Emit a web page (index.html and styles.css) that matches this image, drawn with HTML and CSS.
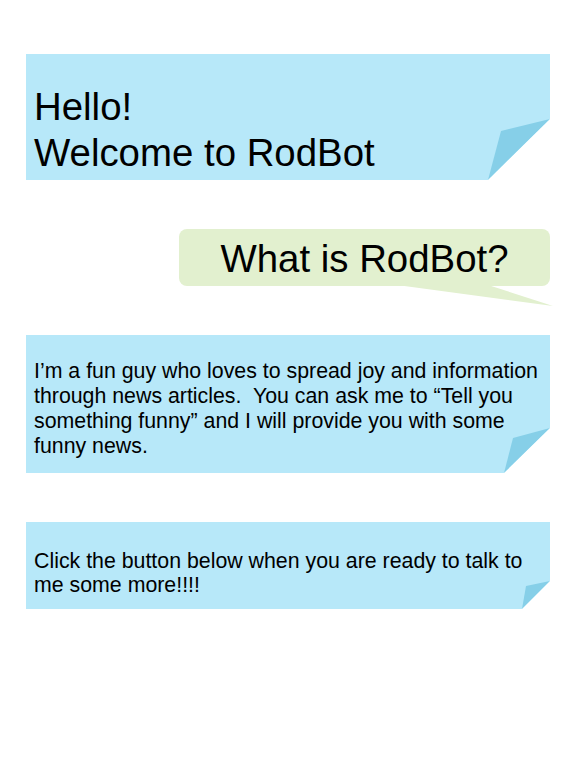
FILE: index.html
```html
<!DOCTYPE html>
<html lang="en">
<head>
<meta charset="utf-8">
<title>RodBot</title>
<link rel="stylesheet" href="styles.css">
</head>
<body>
<main class="chat">
  <section class="note note--lg note--title">
    <p>Hello!<br>Welcome to RodBot</p>
  </section>
  <div class="bubble">What is RodBot?</div>
  <section class="note note--md note--about">
    <p>I’m a fun guy who loves to spread joy and information through news articles.  You can ask me to “Tell you something funny” and I will provide you with some funny news.</p>
  </section>
  <section class="note note--sm note--cta">
    <p>Click the button below when you are ready to talk to me some more!!!!</p>
  </section>
</main>
</body>
</html>
```
FILE: styles.css
```css
* { box-sizing: border-box; }
html, body { margin: 0; padding: 0; background: #ffffff; }
body {
  font-family: "Liberation Sans", Arial, sans-serif;
  color: #000;
  width: 576px;
}
.chat {
  display: flex;
  flex-direction: column;
  gap: 49px;
  padding: 54px 26px 0 26px;
}
.note {
  position: relative;
  background: #b7e8f9;
  width: 524px;
}
.note p { margin: 0; white-space: pre-wrap; }
.note::after {
  content: "";
  position: absolute;
  right: 0;
  bottom: 0;
  background: #86cfe8;
}
.note--lg { clip-path: polygon(0 0, 100% 0, 100% calc(100% - 61px), calc(100% - 62px) 100%, 0 100%); }
.note--lg::after { width: 62px; height: 61px; clip-path: polygon(100% 0, 13px 12px, 0 100%); }
.note--md { clip-path: polygon(0 0, 100% 0, 100% calc(100% - 45px), calc(100% - 46px) 100%, 0 100%); }
.note--md::after { width: 46px; height: 45px; clip-path: polygon(100% 0, 9px 10px, 0 100%); }
.note--sm { clip-path: polygon(0 0, 100% 0, 100% calc(100% - 28px), calc(100% - 28px) 100%, 0 100%); }
.note--sm::after { width: 28px; height: 28px; clip-path: polygon(100% 0, 4px 5px, 0 100%); }

.note--title {
  height: 126px;
  padding: 30px 8px 0 8px;
  font-size: 38.4px;
  line-height: 46px;
}
.note--about {
  height: 138px;
  padding: 24px 10px 0 8px;
  font-size: 21.33px;
  line-height: 25px;
}
.note--cta {
  height: 87px;
  padding: 27px 10px 0 8px;
  font-size: 21.33px;
  line-height: 24px;
}
.bubble {
  position: relative;
  align-self: flex-end;
  width: 371px;
  height: 57px;
  background: #e2f0cf;
  border-radius: 8px;
  font-size: 38.4px;
  line-height: 57px;
  padding: 1px 0 0 0;
  text-align: center;
}
.bubble::after {
  content: "";
  position: absolute;
  left: 218px;
  top: calc(100% - 1px);
  width: 156px;
  height: 21px;
  background: #e2f0cf;
  clip-path: polygon(0 0, 100% 100%, 91px 0);
}
```
